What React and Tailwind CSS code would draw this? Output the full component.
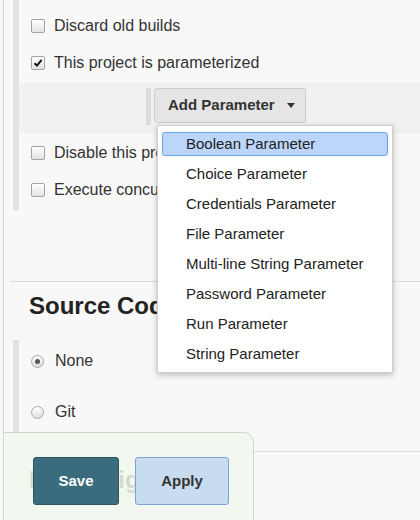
import { useState } from "react";

const params = [
  "Boolean Parameter",
  "Choice Parameter",
  "Credentials Parameter",
  "File Parameter",
  "Multi-line String Parameter",
  "Password Parameter",
  "Run Parameter",
  "String Parameter",
];

function Checkbox({ checked }) {
  return (
    <span className="flex h-[14px] w-[14px] items-center justify-center rounded-[2px] border border-[#a3a3a3] bg-gradient-to-b from-white to-[#e3e3e3]">
      {checked && (
        <svg width="10" height="10" viewBox="0 0 10 10">
          <path d="M1.5 5.2 L4 7.6 L8.6 1.8" fill="none" stroke="#111" strokeWidth="2" />
        </svg>
      )}
    </span>
  );
}

function Radio({ checked }) {
  return (
    <span className="flex h-[13px] w-[13px] items-center justify-center rounded-full border border-[#a8a8a8] bg-gradient-to-b from-white to-[#dedede]">
      {checked && <span className="h-[5px] w-[5px] rounded-full bg-[#555]" />}
    </span>
  );
}

function CheckRow({ label, checked, className = "" }) {
  return (
    <div className={"flex h-[20px] items-center gap-[9px] pl-[12px] " + className}>
      <Checkbox checked={checked} />
      <span className="whitespace-nowrap text-[16px] text-[#333]">{label}</span>
    </div>
  );
}

export default function App() {
  const [selected] = useState(0);

  return (
    <div className="relative h-[520px] w-[420px] overflow-hidden bg-[#f8f8f8] font-['Liberation_Sans',Arial,sans-serif]">
      <div className="ml-[3px] h-full border-l border-[#d6d6d6]">
        {/* General options */}
        <div className="ml-[9px] border-l-[6px] border-[#e2e2e2] pt-[16px] pb-[10px]">
          <CheckRow label="Discard old builds" />
          <CheckRow label="This project is parameterized" checked className="mt-[17px]" />
          <div className="mt-[10px] flex h-[50px] bg-[#f1f1f1] pt-[5px]">
            <div className="ml-[127px] h-[37px] w-[5px] bg-[#dcdcdc]" />
            <button className="ml-[3px] flex h-[35px] w-[152px] items-center gap-[12px] rounded-[3px] border border-[#cdcdcd] bg-[#e5e5e5] pl-[13px] text-[15px] font-bold text-[#333]">
              Add Parameter
              <svg width="8" height="5" viewBox="0 0 8 5">
                <path d="M0 0 L8 0 L4 5 Z" fill="#333" />
              </svg>
            </button>
          </div>
          <CheckRow label="Disable this project" className="mt-[10px]" />
          <CheckRow label="Execute concurrent builds if necessary" className="mt-[17px]" />
        </div>

        <div className="ml-[6px] mt-[71px] border-t border-[#dcdcdc]" />
        <h2 className="mt-[10px] pl-[25px] text-[24px] leading-[28px] font-bold text-[#222] whitespace-nowrap">
          Source Code Management
        </h2>

        <div className="ml-[9px] mt-[20px] border-l-[6px] border-[#e2e2e2] pt-[11px] pb-[15px]">
          <div className="flex h-[20px] items-center gap-[11px] pl-[12px]">
            <Radio checked />
            <span className="text-[16px] text-[#333]">None</span>
          </div>
          <div className="mt-[31px] flex h-[20px] items-center gap-[11px] pl-[12px]">
            <Radio />
            <span className="text-[16px] text-[#333]">Git</span>
          </div>
        </div>

        <div className="ml-[6px] mt-[14px] border-t border-[#dcdcdc]" />
        <h2 className="mt-[14px] pl-[25px] text-[24px] leading-[28px] font-bold text-[#222] whitespace-nowrap">
          Build Triggers
        </h2>
      </div>

      {/* Parameter menu */}
      <div className="absolute left-[157px] top-[125px] w-[236px] border border-[#cfcfcf] bg-white py-[3px] shadow-[0_2px_6px_rgba(0,0,0,0.25)]">
        {params.map((p, i) => (
          <div key={p} className="h-[30px] px-[4px] py-[3px]">
            <div
              className={
                "flex h-full items-center rounded-[3px] border pl-[23px] text-[15px] text-[#222] whitespace-nowrap " +
                (i === selected ? "border-[#6c9ff0] bg-[#bcd5fb]" : "border-transparent")
              }
            >
              {p}
            </div>
          </div>
        ))}
      </div>

      {/* Sticky save bar */}
      <div className="absolute left-[3px] top-[432px] h-[100px] w-[251px] rounded-tr-[10px] border border-[#c6dac7] bg-[rgba(241,247,238,0.86)] pl-[29px] pt-[24px]">
        <div className="flex gap-[16px]">
          <button className="h-[48px] w-[86px] rounded-[3px] border border-[#2c5565] bg-[#3b6c7e] text-[15px] font-bold text-white">
            Save
          </button>
          <button className="h-[48px] w-[94px] rounded-[3px] border border-[#7ba3d8] bg-[#c8dcf0] text-[15px] font-bold text-[#333]">
            Apply
          </button>
        </div>
      </div>
    </div>
  );
}
